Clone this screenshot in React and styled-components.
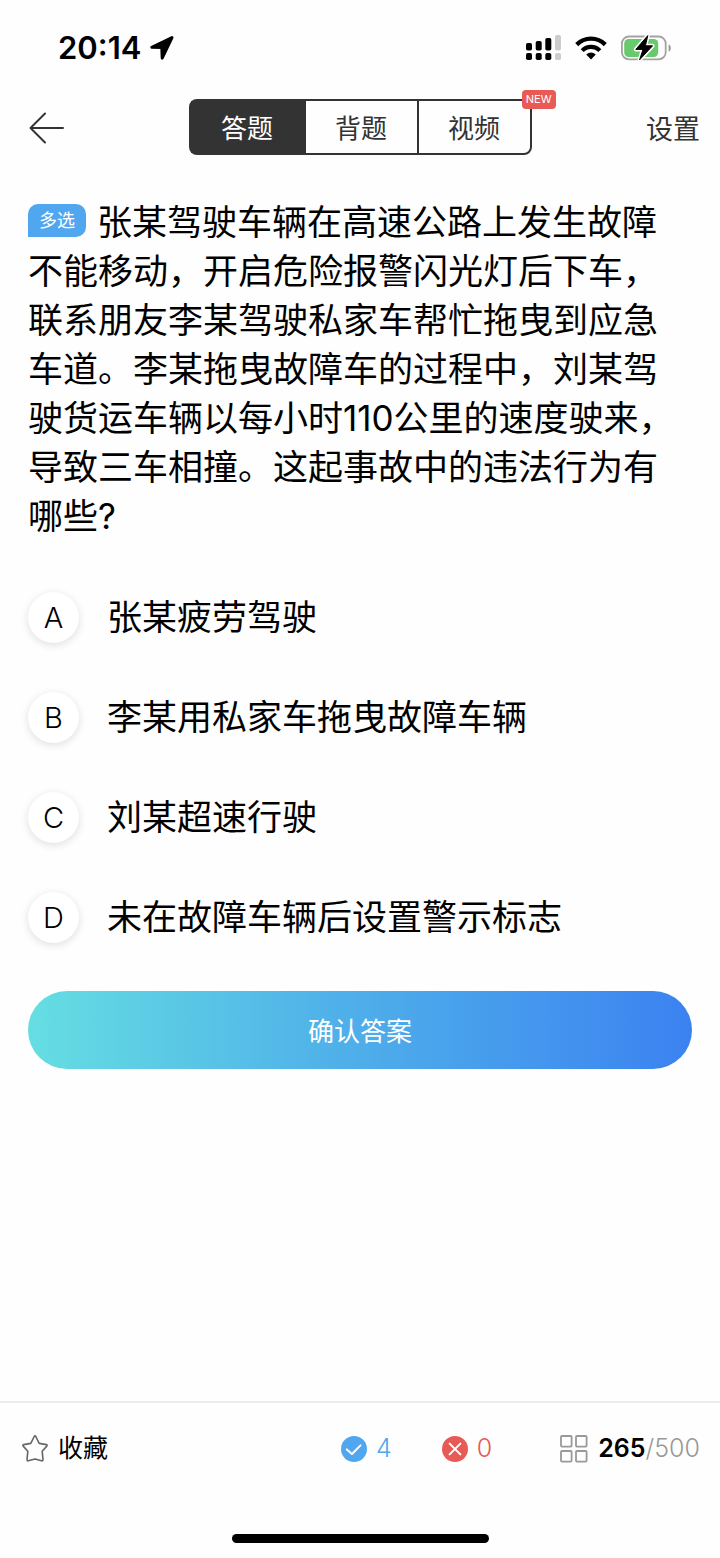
import React, { useState } from 'react';
import styled, { createGlobalStyle } from 'styled-components';

const GlobalStyle = createGlobalStyle`
* {
    box-sizing: border-box;
}
body {
    margin: 0;
    background: #fefefe;
    color: #000;
    font-family: Inter, "Noto Sans CJK SC", sans-serif;
    line-height: 1.4;
}
button {
    margin: 0;
    padding: 0;
    border: 0;
    background: none;
    color: inherit;
    font: inherit;
    cursor: pointer;
}
svg {
    display: block;
    flex: none;
}
`

const question = '张某驾驶车辆在高速公路上发生故障不能移动，开启危险报警闪光灯后下车，联系朋友李某驾驶私家车帮忙拖曳到应急车道。李某拖曳故障车的过程中，刘某驾驶货运车辆以每小时110公里的速度驶来，导致三车相撞。这起事故中的违法行为有哪些?';

const options = [
    { key: 'A', text: '张某疲劳驾驶' },
    { key: 'B', text: '李某用私家车拖曳故障车辆' },
    { key: 'C', text: '刘某超速行驶' },
    { key: 'D', text: '未在故障车辆后设置警示标志' },
];

const tabs = ['答题', '背题', '视频'];

const LocationIcon = () => (
    <svg width="26" height="26" viewBox="0 0 26 26" aria-hidden="true">
        <path d="M23 2.6 2.8 12.3 12.8 12.6 13.2 23.2Z" stroke="#000" strokeWidth="3" strokeLinejoin="round" />
    </svg>
);

const SignalIcon = () => (
    <svg width="36" height="26" viewBox="0 0 36 26" aria-hidden="true">
        <rect x="0" y="8" width="6" height="7.6" rx="1.8" />
        <rect x="9.7" y="6" width="6" height="9.6" rx="1.8" />
        <rect x="19.3" y="3" width="6" height="12.6" rx="1.8" />
        <rect x="0" y="18" width="6" height="7" rx="1.8" />
        <rect x="9.7" y="18" width="6" height="7" rx="1.8" />
        <rect x="19.3" y="18" width="6" height="7" rx="1.8" />
        <rect x="29" y="0" width="6" height="15.6" rx="1.8" fill="#ccc" />
        <rect x="29" y="18" width="6" height="7" rx="1.8" fill="#ccc" />
    </svg>
);

const WifiIcon = () => (
    <svg width="32" height="24" viewBox="0 0 32 24" aria-hidden="true">
        <path d="M1.7 8.6A20.3 20.3 0 0 1 30.3 8.6" fill="none" stroke="#000" strokeWidth="4.3" />
        <path d="M7.2 14.6A12.2 12.2 0 0 1 24.8 14.6" fill="none" stroke="#000" strokeWidth="4.2" />
        <path d="M16 23.6 11.2 18.6Q16 14.6 20.8 18.6Z" />
    </svg>
);

const BatteryIcon = () => (
    <svg width="52" height="32" viewBox="0 0 52 32" aria-hidden="true">
        <rect x="1.9" y="4.5" width="43.8" height="22.8" rx="7" fill="none" stroke="#a3a3a3" strokeWidth="1.8" />
        <path d="M48.6 12.4C51.6 13.2 51.6 18.8 48.6 19.6Z" fill="#999" />
        <rect x="4.2" y="7" width="34" height="18" rx="4.5" fill="#68c96d" />
        <path d="M27.8 3.6 15.8 17.4H23L19.6 27.8 32.6 13.8H25.4Z" stroke="#fefefe" strokeWidth="4" strokeLinejoin="round" />
        <path d="M27.8 3.6 15.8 17.4H23L19.6 27.8 32.6 13.8H25.4Z" stroke="#000" strokeWidth="1" strokeLinejoin="round" />
    </svg>
);

const BackIcon = () => (
    <svg width="36" height="32" viewBox="0 0 36 32" fill="none" stroke="#333" strokeWidth="2" strokeLinecap="round" strokeLinejoin="round" aria-hidden="true">
        <path d="M16 1.5 1.5 16 16 30.5M1.5 16H34" />
    </svg>
);

const StarIcon = () => (
    <svg width="26" height="27" viewBox="0 0 26 27" fill="none" stroke="#666" strokeWidth="1.6" strokeLinejoin="round" aria-hidden="true">
        <path d="M12.2 1.5Q13 .2 13.8 1.5L17.2 8.4 24.3 9.6Q25.7 10 24.8 11.1L20.2 16.3 21 24.6Q21 26.2 19.6 25.8L13 24 6.4 25.8Q5 26.2 5 24.6L5.8 16.3 1.2 11.1Q.3 10 1.7 9.6L8.8 8.4Z" />
    </svg>
);

const RightIcon = () => (
    <svg width="26" height="26" viewBox="0 0 26 26" fill="none" aria-hidden="true">
        <circle cx="13" cy="13" r="13" fill="#50a7f0" />
        <path d="M5.8 13.4 11 18 19.5 9.4" stroke="#fff" strokeWidth="2" strokeLinecap="round" strokeLinejoin="round" />
    </svg>
);

const WrongIcon = () => (
    <svg width="26" height="26" viewBox="0 0 26 26" fill="none" aria-hidden="true">
        <circle cx="13" cy="13" r="13" fill="#e75a55" />
        <path d="M7.6 7.6 18.4 18.4M18.4 7.6 7.6 18.4" stroke="#fff" strokeWidth="2" strokeLinecap="round" />
    </svg>
);

const GridIcon = () => (
    <svg width="28" height="28" viewBox="0 0 28 28" fill="none" stroke="#999" strokeWidth="1.8" aria-hidden="true">
        <rect x="1" y="1" width="10.6" height="10.6" rx="1" />
        <rect x="16" y="1" width="10.6" height="10.6" rx="1" />
        <rect x="1" y="16" width="10.6" height="10.6" rx="1" />
        <rect x="16" y="16" width="10.6" height="10.6" rx="1" />
    </svg>
);

const App = () => {
    const [tab, setTab] = useState('答题');

    return (
        <Page>
            <GlobalStyle />
            <StatusBar>
                <Clock>20:14 <LocationIcon /></Clock>
                <StatusIcons>
                    <SignalIcon />
                    <WifiIcon />
                    <BatteryIcon />
                </StatusIcons>
            </StatusBar>

            <Header>
                <BackButton aria-label="返回"><BackIcon /></BackButton>
                <Tabs>
                    {tabs.map(name => (
                        <Tab key={name} $active={name === tab} onClick={() => setTab(name)}>{name}</Tab>
                    ))}
                    <NewBadge>NEW</NewBadge>
                </Tabs>
                <SettingsButton>设置</SettingsButton>
            </Header>

            <Main>
                <Question><Tag>多选</Tag>{question}</Question>
                <Options>
                    {options.map(option => (
                        <Option key={option.key}>
                            <HiddenCheckbox type="checkbox" name="answer" value={option.key} />
                            <Letter>{option.key}</Letter>
                            <span>{option.text}</span>
                        </Option>
                    ))}
                </Options>
                <ConfirmButton>确认答案</ConfirmButton>
            </Main>

            <Footer>
                <Toolbar>
                    <FavoriteButton><StarIcon />收藏</FavoriteButton>
                    <Count $color="#50a7f0"><RightIcon />4</Count>
                    <Count $color="#e75a55"><WrongIcon />0</Count>
                    <Progress>
                        <GridIcon />
                        <span><b>265</b>/500</span>
                    </Progress>
                </Toolbar>
                <HomeIndicator />
            </Footer>
        </Page>
    );
}

const Page = styled.div`
display: flex;
flex-direction: column;
min-height: 100vh;
`

const StatusBar = styled.div`
display: flex;
align-items: center;
justify-content: space-between;
height: 96px;
padding: 0 48px 0 58px;
`

const Clock = styled.div`
display: flex;
align-items: center;
gap: 8px;
font-size: 31px;
font-weight: 600;
line-height: 40px;
`

const StatusIcons = styled.div`
display: flex;
align-items: center;
gap: 13px;
`

const Header = styled.header`
display: grid;
grid-template-columns: 1fr auto 1fr;
align-items: center;
height: 62px;
padding: 0 20px;
`

const BackButton = styled.button`
justify-self: start;
padding: 2px 0 0 9px;
`

const Tabs = styled.nav`
position: relative;
display: flex;
height: 56px;
border: 2px solid #333;
border-radius: 8px;
`

const Tab = styled.button`
width: 113px;
padding-top: 4px;
background: ${props => props.$active ? '#333' : 'transparent'};
color: ${props => props.$active ? '#fff' : '#333'};
font-size: 26px;
& + & {
    border-left: 2px solid #333;
}
`

const NewBadge = styled.span`
position: absolute;
top: -11px;
right: -26px;
padding: 0 4px;
border-radius: 4px;
background: #e75a55;
color: #fff;
font-size: 11px;
line-height: 19px;
`

const SettingsButton = styled.button`
justify-self: end;
padding-top: 6px;
color: #333;
font-size: 27px;
`

const Main = styled.main`
flex: 1;
padding: 40px 28px;
`

const Question = styled.p`
margin: 0 0 26px;
padding-right: 8px;
font-size: 35px;
line-height: 49px;
`

const Tag = styled.span`
display: inline-block;
margin-right: 11px;
padding: 0 11px;
border-radius: 10px 10px 10px 0;
background: #50a7f0;
color: #fff;
font-size: 18px;
line-height: 33px;
vertical-align: 8px;
`

const Options = styled.div`
display: flex;
flex-direction: column;
`

const Option = styled.label`
display: flex;
align-items: center;
gap: 28px;
height: 100px;
font-size: 35px;
line-height: 49px;
cursor: pointer;
`

const Letter = styled.span`
display: flex;
align-items: center;
justify-content: center;
width: 51px;
height: 51px;
border-radius: 50%;
background: #fff;
box-shadow: 0 2px 8px rgba(0, 0, 0, 0.13);
font-size: 29px;
font-weight: 300;
`

const HiddenCheckbox = styled.input`
position: absolute;
opacity: 0;
&:checked + ${Letter} {
    background: #50a7f0;
    color: #fff;
}
`

const ConfirmButton = styled.button`
display: block;
width: 100%;
height: 78px;
margin-top: 24px;
padding-top: 4px;
border-radius: 39px;
background: linear-gradient(90deg, #65dee2, #50b2e9 45%, #3b82f1);
color: #fff;
font-size: 26px;
`

const Footer = styled.footer`
border-top: 2px solid #ececec;
`

const Toolbar = styled.div`
display: flex;
align-items: center;
gap: 50px;
height: 91px;
padding: 0 20px 0 22px;
font-size: 25px;
`

const FavoriteButton = styled.button`
display: flex;
align-items: center;
gap: 10px;
margin-right: auto;
`

const Count = styled.span`
display: flex;
align-items: center;
gap: 9px;
color: ${props => props.$color};
font-weight: 300;
`

const Progress = styled.button`
display: flex;
align-items: center;
gap: 10px;
margin-left: 18px;
color: #999;
font-weight: 300;
b {
    color: #000;
    font-weight: 600;
}
`

const HomeIndicator = styled.div`
width: 257px;
height: 9px;
margin: 40px auto 15px;
border-radius: 5px;
background: #000;
`

export default App;
